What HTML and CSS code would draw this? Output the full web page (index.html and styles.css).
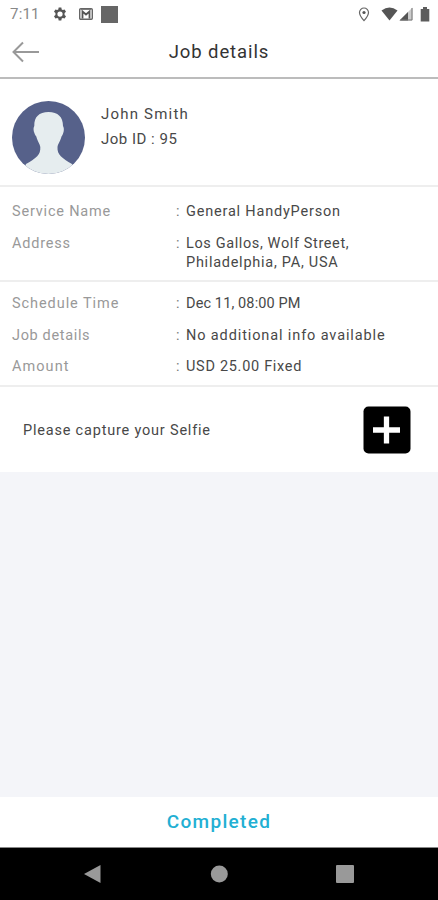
FILE: index.html
```html
<!DOCTYPE html>
<html lang="en">
<head>
<meta charset="utf-8">
<title>Job details</title>
<link rel="stylesheet" href="styles.css">
</head>
<body>
<div class="screen">
  <div class="status">
    <span class="clock">7:11</span>
    <svg class="gear" width="14" height="14" viewBox="0 0 24 24"><path fill="#555" fill-rule="evenodd" d="M9.7 1h4.6l.6 3.2 2 1.1 3-1.2 2.4 4.1-2.5 2.1v3.4l2.5 2.1-2.4 4.1-3-1.2-2 1.1-.6 3.2H9.700l-.6-3.200-2-1.100-3 1.200-2.400-4.100 2.500-2.100v-3.400L1.700 8.200l2.400-4.100 3 1.200 2-1.100zM12 7.500a4.500 4.500 0 1 0 0 9 4.500 4.500 0 0 0 0-9z"/></svg>
    <svg class="mail" width="14" height="12" viewBox="0 0 14 12"><rect x=".7" y=".7" width="12.600" height="10.600" rx="1" fill="#fff" stroke="#666" stroke-width="1.400"/><path d="M3.500 10.500V3.500L7 6.500l3.500-3v7" fill="none" stroke="#555" stroke-width="1.800"/><path d="M2 1.200h10" stroke="#666"/></svg>
    <span class="block"></span>
    <svg class="pin" width="12" height="15" viewBox="0 0 12 15"><path d="M6 1a4.500 4.500 0 0 0-4.500 4.500C1.500 8.700 6 13.600 6 13.600s4.500-4.900 4.500-8.100A4.500 4.500 0 0 0 6 1z" fill="none" stroke="#666" stroke-width="1.200"/><circle cx="6" cy="5.500" r="1.600" fill="#555"/></svg>
    <svg class="wifi" width="17" height="14" viewBox="0 0 17 14"><path d="M.5 3.500Q8.500-2.500 16.500 3.500L8.500 13.500z" fill="#555"/></svg>
    <svg class="signal" width="14" height="14" viewBox="0 0 14 14"><path d="M13.500.5v13H.5z" fill="#ccc"/><path d="M9 5v8.500H.5z" fill="#555"/><path d="M13 1v12H1.500" fill="none" stroke="#777"/></svg>
    <svg class="battery" width="10" height="15" viewBox="0 0 10 15"><path d="M3 0h4v2h2.300v12.500H.7V2H3z" fill="#5c5c5c"/></svg>
  </div>
  <header class="header">
    <svg class="back" width="28" height="22" viewBox="0 0 28 22"><path d="M27 11H1.500M11 1.500L1.500 11l9.500 9.500" fill="none" stroke="#999" stroke-width="2"/></svg>
    <h1 class="title">Job details</h1>
  </header>
  <section class="profile">
    <svg class="avatar" width="73" height="73" viewBox="0 0 73 73"><defs><clipPath id="disc"><circle cx="36.500" cy="36.500" r="36.500"/></clipPath></defs><g clip-path="url(#disc)"><path fill="#56618a" d="M0 0h73v73H0z"/><path fill="#e6edef" d="M36.500 11C27 11 22 16 22.300 25c-1.800 3 0 8 2 10.500 1.200 5 3.700 7.500 4 10.500.5 8-4 11-14.300 17L10 73h53l-3-10c-10-6-15-9-14.500-17 .3-3 2.800-5.500 4-10.500 2-2.500 3.300-7.500 1.500-10.500C51 16 46 11 36.500 11z"/></g></svg>
    <div class="person"><div class="name">John Smith</div><div class="jobid">Job ID : 95</div></div>
  </section>
  <section class="info service">
    <div class="row"><span class="label l-service">Service Name</span><span class="colon">:</span><span class="value v-general">General HandyPerson</span></div>
    <div class="row"><span class="label l-address">Address</span><span class="colon">:</span><span class="value"><span class="v-street">Los Gallos, Wolf Street,</span><br><span class="v-city">Philadelphia, PA, USA</span></span></div>
  </section>
  <section class="info schedule">
    <div class="row"><span class="label l-time">Schedule Time</span><span class="colon">:</span><span class="value v-date">Dec 11, 08:00 PM</span></div>
    <div class="row"><span class="label l-details">Job details</span><span class="colon">:</span><span class="value v-details">No additional info available</span></div>
    <div class="row"><span class="label l-amount">Amount</span><span class="colon">:</span><span class="value v-amount">USD 25.00 Fixed</span></div>
  </section>
  <section class="selfie">
    <span class="prompt">Please capture your Selfie</span>
    <svg class="add" width="48" height="48" viewBox="0 0 48 48"><rect x=".5" y=".5" width="47" height="47" rx="5"/><path d="M23.500 10.500v27M10 24h27" stroke="#fff" stroke-width="5.300"/></svg>
  </section>
  <main class="space"></main>
  <div class="complete">Completed</div>
  <nav class="nav">
    <svg width="18" height="20" viewBox="0 0 18 20"><path d="M0 10L16.500 1v18z" fill="#999"/></svg>
    <svg width="18" height="18" viewBox="0 0 18 18"><circle cx="9.300" cy="9" r="8.500" fill="#999"/></svg>
    <svg width="18" height="18" viewBox="0 0 18 18"><rect width="18" height="18" rx="1" fill="#999"/></svg>
  </nav>
</div>
</body>
</html>
```
FILE: styles.css
```css
* { box-sizing: border-box; }
body { margin: 0; background: #fff; font-family: Roboto, "Liberation Sans", sans-serif; color: #484848; }
svg { display: block; flex: none; }
.screen { width: 438px; height: 900px; display: flex; flex-direction: column; overflow: hidden; }
.status { height: 28px; display: flex; align-items: center; padding: 0 8px 0 10px; }
.clock { width: 42px; font-size: 15px; letter-spacing: .2px; color: #888; }
.gear { margin-right: 12px; margin-left: 1px; }
.mail { margin-right: 8px; }
.block { width: 17px; height: 17px; background: #666; margin-right: auto; }
.pin { margin-right: 11px; }
.wifi { margin-right: 1px; }
.signal { margin-right: 7px; }
.header { height: 51px; display: grid; grid-template-columns: 28px 1fr 28px; align-items: center; padding: 0 12px 2px; border-bottom: 2px solid #bcbcbc; }
.title { margin: 0; text-align: center; font-size: 18.5px; font-weight: 400; letter-spacing: .9px; color: #333; }
.profile { height: 108px; display: flex; padding: 22px 12px 0; border-bottom: 2px solid #eee; }
.person { margin-left: 16px; padding-top: 1px; font-size: 15px; line-height: 25px; }
.name { letter-spacing: 1.2px; }
.jobid { letter-spacing: .5px; }
.info { display: flex; flex-direction: column; padding-left: 12px; border-bottom: 2px solid #eee; font-size: 14.5px; line-height: 19px; }
.row { display: flex; }
.label { width: 164px; color: #999; letter-spacing: .8px; }
.l-time { letter-spacing: .93px; }
.l-details { letter-spacing: .65px; }
.l-amount { letter-spacing: 1.05px; }
.colon { width: 10px; color: #777; }
.value { letter-spacing: .5px; white-space: nowrap; }
.v-general { letter-spacing: .8px; }
.v-street { letter-spacing: .62px; }
.v-city { letter-spacing: .74px; }
.v-date { letter-spacing: .12px; }
.v-details { letter-spacing: .88px; }
.v-amount { letter-spacing: .7px; }
.service { height: 95px; padding-top: 15px; gap: 13px; }
.schedule { height: 105px; padding-top: 12px; gap: 12.500px; }
.selfie { height: 85px; display: flex; justify-content: space-between; align-items: center; padding: 0 27px 0 23px; }
.prompt { font-size: 14.5px; letter-spacing: .8px; padding-top: 1px; }
.space { flex: 1; background: #f4f5f9; }
.complete { height: 51px; display: flex; align-items: center; justify-content: center; padding-bottom: 1px; border-bottom: 1px solid #888; color: #22afd3; font-size: 19px; font-weight: 500; letter-spacing: 1.3px; }
.nav { height: 52px; background: #000; display: flex; justify-content: space-between; align-items: center; padding: 0 84px; }
```
